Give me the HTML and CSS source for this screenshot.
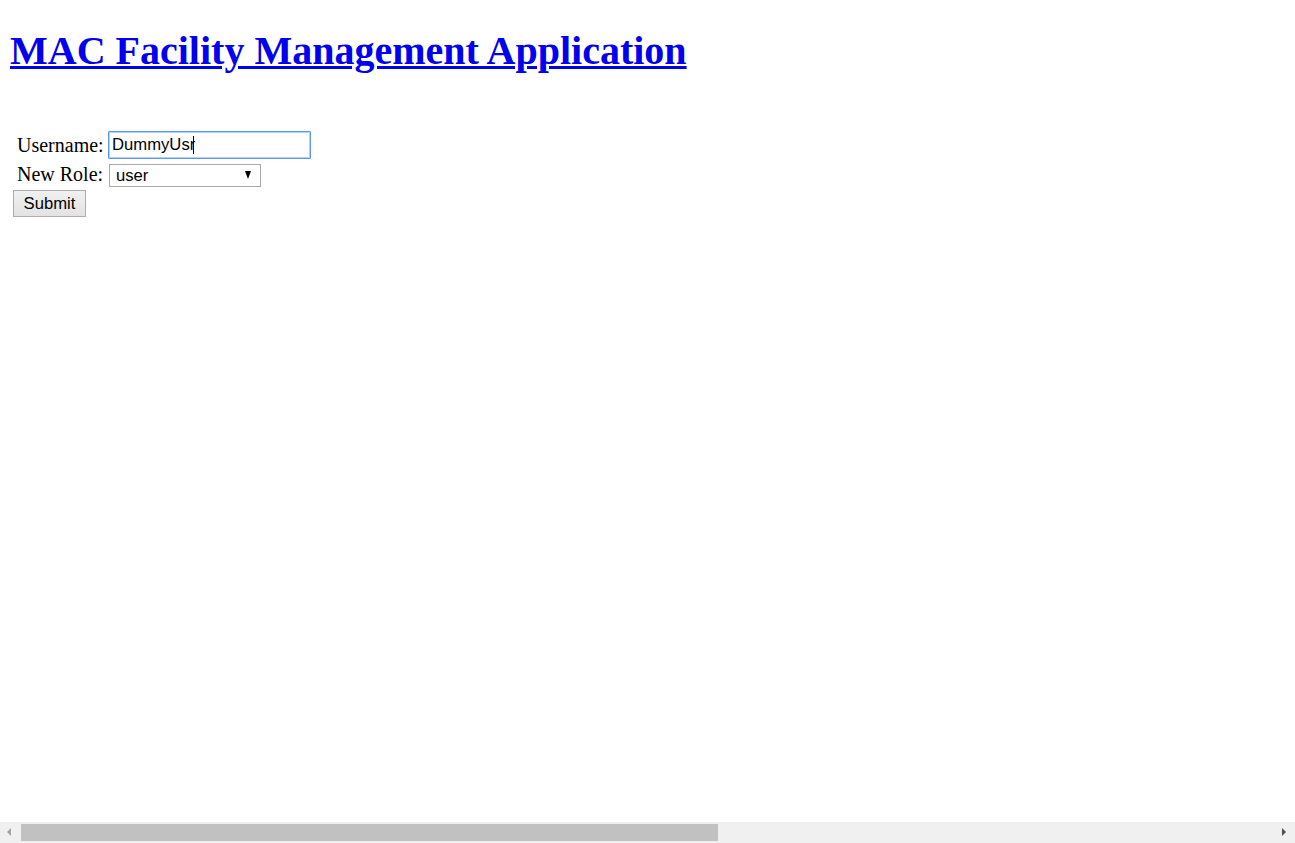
FILE: index.html
```html
<!DOCTYPE html>
<html lang="en">
<head>
<meta charset="utf-8">
<title>MAC Facility Management Application</title>
<link rel="stylesheet" href="styles.css">
</head>
<body>
<h1 class="title"><a href="#">MAC Facility Management Application</a></h1>
<form class="role-form">
  <div class="row row-user">
    <label class="lbl">Username:</label>
    <div class="field">DummyUsr<span class="caret"></span></div>
  </div>
  <div class="row row-role">
    <label class="lbl">New Role:</label>
    <div class="select-wrap">
      <select class="select"><option>user</option></select>
      <span class="arrow"></span>
    </div>
  </div>
  <div class="row row-btn">
    <button type="button" class="btn">Submit</button>
  </div>
</form>
<div class="hscroll">
  <span class="hs-left"></span>
  <span class="hs-thumb"></span>
  <span class="hs-right"></span>
</div>
</body>
</html>
```
FILE: styles.css
```css
html, body {
  height: 100%;
}
body {
  margin: 0;
  padding: 0 10px;
  font-family: "Liberation Serif", "Times New Roman", serif;
  font-size: 20px;
  color: #000;
  background: #fff;
  overflow: hidden;
}
.title {
  margin: 28px 0 0;
  font-size: 40px;
  line-height: 46px;
  font-weight: bold;
}
.title a {
  color: #0000ee;
  text-decoration: underline;
  text-decoration-thickness: 3px;
}
.role-form {
  margin-top: 57px;
  padding-left: 3px;
  display: flex;
  flex-direction: column;
}
.row {
  display: flex;
  align-items: center;
}
.row-role {
  margin-top: 4px;
}
.row-btn {
  margin-top: 4px;
}
.lbl {
  width: 95px;
  padding-left: 4px;
  box-sizing: border-box;
  line-height: 23px;
}
.field {
  width: 203px;
  height: 28px;
  box-sizing: border-box;
  border: 1px solid #5e95ee;
  box-shadow: inset 0 0 0 1px #b5cff6;
  border-radius: 1px;
  padding: 0 3px;
  display: flex;
  align-items: center;
  font-family: "Liberation Sans", Arial, sans-serif;
  font-size: 16.67px;
  color: #000;
}
.caret {
  display: inline-block;
  width: 1px;
  height: 18px;
  background: #000;
  margin-left: -2px;
}
.select-wrap {
  position: relative;
  margin-left: 1px;
  width: 152px;
  height: 23px;
}
.select {
  appearance: none;
  -webkit-appearance: none;
  width: 100%;
  height: 100%;
  box-sizing: border-box;
  border: 1px solid #a9a9a9;
  border-radius: 0;
  background: #fff;
  padding: 0 0 0 6px;
  margin: 0;
  font-family: "Liberation Sans", Arial, sans-serif;
  font-size: 16.67px;
  color: #000;
}
.arrow {
  position: absolute;
  right: 10px;
  top: 8px;
  width: 0;
  height: 0;
  border-left: 3.5px solid transparent;
  border-right: 3.5px solid transparent;
  border-top: 8px solid #000;
  pointer-events: none;
}
.btn {
  width: 73px;
  height: 27px;
  box-sizing: border-box;
  margin: 0;
  padding: 0;
  border: 1px solid #adadad;
  border-radius: 0;
  background: linear-gradient(#f0f0f0, #e3e3e3);
  font-family: "Liberation Sans", Arial, sans-serif;
  font-size: 16.67px;
  color: #000;
}
.hscroll {
  position: fixed;
  left: 0;
  right: 0;
  bottom: 0;
  height: 21px;
  background: #f0f0f0;
}
.hs-thumb {
  position: absolute;
  left: 21px;
  top: 2px;
  width: 697px;
  height: 17px;
  background: #c1c1c1;
}
.hs-left {
  position: absolute;
  left: 7px;
  top: 6px;
  width: 0;
  height: 0;
  border-top: 4px solid transparent;
  border-bottom: 4px solid transparent;
  border-right: 4px solid #a3a3a3;
}
.hs-right {
  position: absolute;
  right: 9px;
  top: 6px;
  width: 0;
  height: 0;
  border-top: 4px solid transparent;
  border-bottom: 4px solid transparent;
  border-left: 4px solid #505050;
}
```
